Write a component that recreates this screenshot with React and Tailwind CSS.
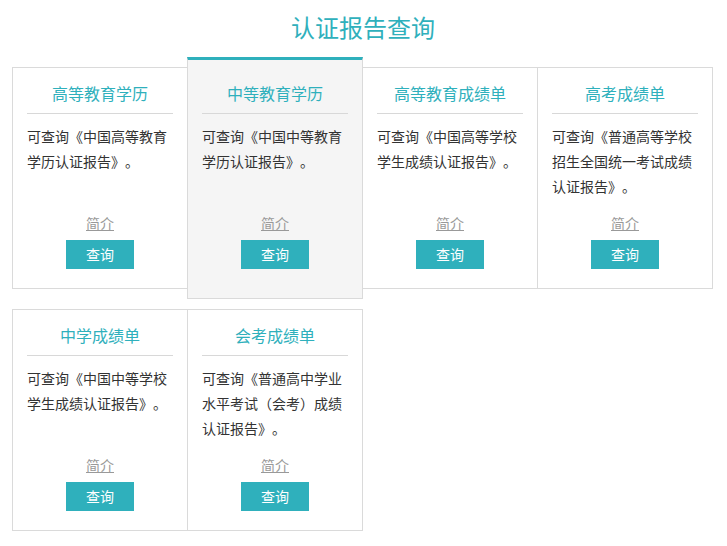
const cards = [
  { title: '高等教育学历', desc: '可查询《中国高等教育学历认证报告》。' },
  { title: '中等教育学历', desc: '可查询《中国中等教育学历认证报告》。', active: true },
  { title: '高等教育成绩单', desc: '可查询《中国高等学校学生成绩认证报告》。' },
  { title: '高考成绩单', desc: '可查询《普通高等学校招生全国统一考试成绩认证报告》。' },
  { title: '中学成绩单', desc: '可查询《中国中等学校学生成绩认证报告》。' },
  { title: '会考成绩单', desc: '可查询《普通高中学业水平考试（会考）成绩认证报告》。' },
];

function Card({ card, first }) {
  const base = 'w-[176px] shrink-0 border border-[#dadada] px-[14px]';
  const cls = card.active
    ? `${base} relative z-10 -mt-[10px] -mb-[10px] border-t-[3px] border-t-[#2fb0bc] bg-[#f5f5f5] pt-[21px] pb-[29px]`
    : `${base} bg-white pt-[13px] pb-[19px]`;
  return (
    <div className={`${cls} ${first ? '' : '-ml-px'}`}>
      <div className="text-center text-[16px] leading-[24px] text-[#2fb0bc]">{card.title}</div>
      <div className="mt-[8px] h-px bg-[#d8d8d8]" />
      <p className="mt-[10px] h-[75px] text-[14px] leading-[25px] text-[#333]">{card.desc}</p>
      <div className="mt-[14px] text-center text-[14px] leading-[20px]">
        <a href="#" className="text-[#999] underline">简介</a>
      </div>
      <button className="mx-auto mt-[7px] block h-[29px] w-[68px] bg-[#2fb0bc] text-[14px] text-white">查询</button>
    </div>
  );
}

export default function App() {
  const rows = [cards.slice(0, 4), cards.slice(4)];
  return (
    <div className="min-h-[546px] bg-white pl-[12px] font-['Microsoft_YaHei','Noto_Sans_CJK_SC',sans-serif] [text-spacing-trim:space-all]">
      <h1 className="pt-[11px] mb-[24px] pr-[13px] text-center text-[24px] leading-[32px] font-normal text-[#2fb0bc]">认证报告查询</h1>
      {rows.map((row, i) => (
        <div key={i} className={`flex items-start ${i > 0 ? 'mt-[20px]' : ''}`}>
          {row.map((c, j) => <Card key={c.title} card={c} first={j === 0} />)}
        </div>
      ))}
    </div>
  );
}
